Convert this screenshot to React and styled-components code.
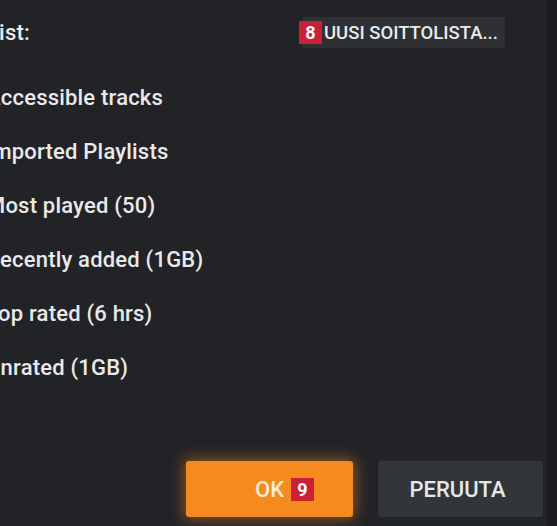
import React from "react";
import styled, { createGlobalStyle } from "styled-components";

const Global = createGlobalStyle`
  html, body {
    margin: 0;
    padding: 0;
    background: #1b1c1f;
    overflow: hidden;
  }
  body {
    font-family: Roboto, "Noto Sans", "Liberation Sans", sans-serif;
  }
`;

const Dialog = styled.div`
  box-sizing: border-box;
  width: 585px;
  height: 526px;
  margin-left: -36px;
  background: #222327;
  border-right: 2px solid #191a1d;
  display: flex;
  flex-direction: column;
  padding: 17px 4px 9px 22px;
  color: #e9e9ea;
`;

const Header = styled.div`
  display: flex;
  align-items: center;
  justify-content: space-between;
  height: 31px;
  padding-right: 38px;
`;

const Label = styled.span`
  font-size: 22px;
  font-weight: 500;
  letter-spacing: 0.2px;
  margin-left: 1px;
`;

const NewButton = styled.button`
  position: relative;
  height: 31px;
  width: 203px;
  border: none;
  background: #2e3033;
  color: #e8eaec;
  font-family: inherit;
  font-size: 18.5px;
  font-weight: 500;
  text-transform: uppercase;
  text-align: left;
  padding: 0 0 0 22px;
  border-radius: 2px;
  white-space: nowrap;
`;

const Badge = styled.span`
  display: inline-flex;
  align-items: center;
  justify-content: center;
  width: 23px;
  height: 23px;
  background: #cc2036;
  color: #fff;
  font-size: 18px;
  font-weight: 700;
  font-family: Roboto, "Liberation Sans", sans-serif;
`;

const CornerBadge = styled(Badge)`
  position: absolute;
  left: -3px;
  top: 4px;
`;

const List = styled.div`
  display: flex;
  flex-direction: column;
  margin-top: 22px;
`;

const Row = styled.div`
  height: 54px;
  display: flex;
  align-items: center;
  font-size: 22px;
  font-weight: 500;
  letter-spacing: 0.2px;
  color: #e9e9ea;
  white-space: nowrap;
`;

const Footer = styled.div`
  margin-top: auto;
  display: flex;
  justify-content: flex-end;
  gap: 25px;
`;

const Button = styled.button`
  width: ${(p) => p.$w}px;
  height: 56px;
  border: none;
  border-radius: 3px;
  font-family: inherit;
  font-size: 22px;
  font-weight: 500;
  text-transform: uppercase;
  display: flex;
  align-items: center;
  justify-content: center;
  gap: 7px;
  background: ${(p) => (p.$primary ? "#f58a1f" : "#323539")};
  color: ${(p) => (p.$primary ? "#fdebd6" : "#e6e8ea")};
  box-shadow: ${(p) =>
    p.$primary ? "0 0 14px 3px rgba(245, 138, 31, 0.45)" : "none"};
  padding-left: ${(p) => (p.$primary ? "36px" : "0")};
`;

const items = [
  "Accessible tracks",
  "Imported Playlists",
  "Most played (50)",
  "Recently added (1GB)",
  "Top rated (6 hrs)",
  "Unrated (1GB)",
];

export default function App() {
  return (
    <>
      <Global />
      <Dialog>
        <Header>
          <Label>List:</Label>
          <NewButton>
            <CornerBadge>8</CornerBadge>
            Uusi soittolista...
          </NewButton>
        </Header>
        <List>
          {items.map((t) => (
            <Row key={t}>{t}</Row>
          ))}
        </List>
        <Footer>
          <Button $primary $w={167}>
            OK <Badge>9</Badge>
          </Button>
          <Button $w={165}>Peruuta</Button>
        </Footer>
      </Dialog>
    </>
  );
}
